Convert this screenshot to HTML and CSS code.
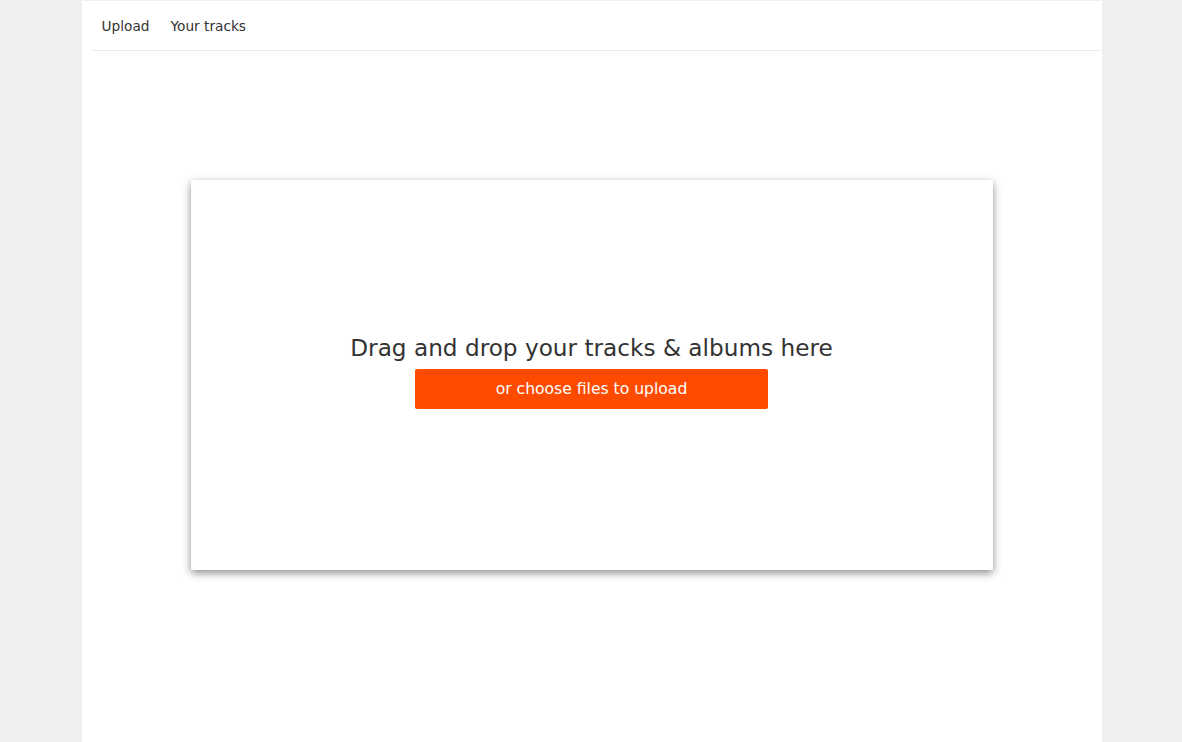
FILE: index.html
```html
<!DOCTYPE html>
<html>
<head>
<meta charset="utf-8">
<link rel="stylesheet" href="styles.css">
</head>
<body>
<div class="page">
  <nav class="tabs">
    <a class="tab">Upload</a>
    <a class="tab">Your tracks</a>
  </nav>
  <main class="content">
    <section class="dropzone">
      <h1 class="title">Drag and drop your tracks &amp; albums here</h1>
      <button class="choose">or choose files to upload</button>
    </section>
  </main>
</div>
</body>
</html>
```
FILE: styles.css
```css
html, body {
  margin: 0;
  padding: 0;
  background: #efefef;
  height: 100%;
}
body {
  font-family: "DejaVu Sans", "Open Sans", sans-serif;
  color: #333;
  padding-left: 1px;
  box-sizing: border-box;
}
.page {
  width: 1020px;
  margin: 1px auto 0;
  background: #fff;
  min-height: 741px;
}
.tabs {
  display: flex;
  gap: 21px;
  margin-left: 10px;
  height: 49px;
  align-items: center;
  border-bottom: 1px solid #ececec;
  padding-left: 10px;
}
.tab {
  font-size: 13.7px;
  color: #333;
}
.content {
  display: flex;
  justify-content: center;
  padding-top: 129px;
}
.dropzone {
  width: 802px;
  height: 390px;
  background: #fff;
  box-shadow: 0 3px 8px rgba(0,0,0,0.45);
  display: flex;
  flex-direction: column;
  align-items: center;
  justify-content: center;
  padding-bottom: 8px;
  box-sizing: border-box;
}
.title {
  margin: 0 0 6px;
  font-weight: normal;
  font-size: 23.2px;
  line-height: 30px;
  color: #333;
}
.choose {
  width: 353px;
  height: 40px;
  border: none;
  border-radius: 2px;
  background: #ff4b00;
  color: #fff;
  font-family: inherit;
  font-size: 15.6px;
}
```
